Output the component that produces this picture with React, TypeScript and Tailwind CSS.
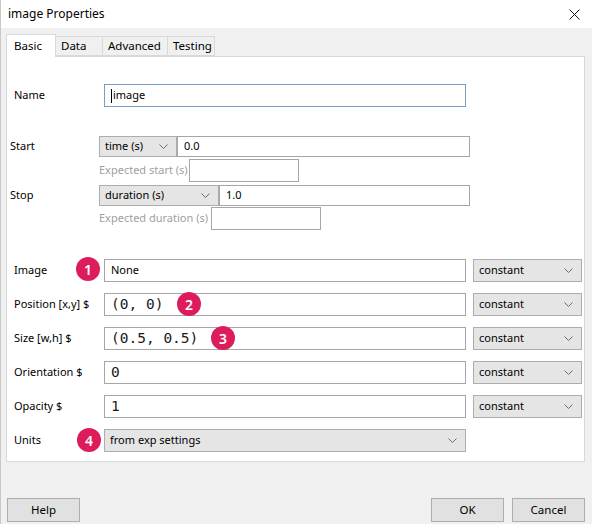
import React from "react";

const ui = "font-['Noto_Sans','Open_Sans',sans-serif]";
const mono = "font-['DejaVu_Sans_Mono','Liberation_Mono',monospace]";

function Chevron() {
  return (
    <svg width="9" height="5" viewBox="0 0 9 5" className="shrink-0">
      <path d="M0.5 0.5 L4.5 4.5 L8.5 0.5" fill="none" stroke="#6d6d6d" strokeWidth="1" />
    </svg>
  );
}

function Select({ label, width, height = "h-[23px]" }: { label: string; width: string; height?: string }) {
  return (
    <div
      className={`${width} ${height} flex shrink-0 items-center justify-between border border-[#adadad] bg-[#e5e5e5] pl-[5px] pr-[8px] text-black`}
    >
      <span>{label}</span>
      <Chevron />
    </div>
  );
}

function TextBox({
  value,
  width,
  height = "h-[23px]",
  code = false,
}: {
  value?: string;
  width: string;
  height?: string;
  code?: boolean;
}) {
  return (
    <div
      className={`${width} ${height} flex shrink-0 items-center border border-[#a6a6a6] bg-white pl-[6px] ${
        code ? `${mono} text-[14.5px] text-[#1a1a1a]` : "text-black"
      }`}
    >
      {value}
    </div>
  );
}

function Badge({ n, className }: { n: number; className: string }) {
  return (
    <div
      className={`absolute flex h-6 w-6 items-center justify-center rounded-full bg-[#dd1c5c] text-[14px] font-semibold text-white ${className}`}
    >
      {n}
    </div>
  );
}

const tabs = [
  { label: "Basic", w: "w-[50px]" },
  { label: "Data", w: "w-[47px]" },
  { label: "Advanced", w: "w-[65px]" },
  { label: "Testing", w: "w-[47px]" },
];

function ParamRow({
  label,
  value,
  code,
  children,
}: {
  label: string;
  value: string;
  code?: boolean;
  children?: React.ReactNode;
}) {
  return (
    <div className="relative flex h-[23px] items-center pl-[7px]">
      <span className="w-[90px] shrink-0">{label}</span>
      <TextBox value={value} width="w-[362px]" code={code} />
      <div className="ml-[7px]">
        <Select label="constant" width="w-[109px]" />
      </div>
      {children}
    </div>
  );
}

export default function App() {
  return (
    <div className={`${ui} flex h-[524px] w-[592px] flex-col border-l border-[#c8c8c8] bg-[#f0f0f0] text-[11px] text-black`}>
      {/* title bar */}
      <div className="flex h-[28px] shrink-0 items-center justify-between bg-white pl-[7px] pr-[12px]">
        <span className="text-[12px]">image Properties</span>
        <svg width="11" height="11" viewBox="0 0 11 11">
          <path d="M0.5 0.5 L10.5 10.5 M10.5 0.5 L0.5 10.5" stroke="#111" strokeWidth="1" />
        </svg>
      </div>

      {/* tabs */}
      <div className="ml-[5px] mt-[5px] flex h-[23px] items-end text-[11.5px]">
        {tabs.map((t, i) =>
          i === 0 ? (
            <div
              key={t.label}
              className={`${t.w} relative z-10 -mb-px flex h-[23px] items-start border border-b-0 border-[#d9d9d9] bg-white pl-[7px] pt-[2px]`}
            >
              {t.label}
            </div>
          ) : (
            <div
              key={t.label}
              className={`${t.w} flex h-[20px] items-center border border-l-0 border-[#d9d9d9] bg-[#f0f0f0] pl-[5px]`}
            >
              {t.label}
            </div>
          ),
        )}
      </div>

      {/* panel */}
      <div className="ml-[5px] mr-[7px] flex h-[406px] flex-col border border-[#d9d9d9] bg-white">
        {/* name */}
        <div className="mt-[27px] flex h-[23px] items-center pl-[7px]">
          <span className="w-[90px] shrink-0">Name</span>
          <div className="flex h-[23px] w-[362px] items-center border border-[#7a9cc6] bg-white pl-[6px]">
            <span className="mr-px h-[14px] w-px bg-black" />
            image
          </div>
        </div>

        {/* start */}
        <div className="mt-[29px] flex h-[21px] items-center pl-[3px]">
          <span className="w-[89px] shrink-0">Start</span>
          <Select label="time (s)" width="w-[78px]" height="h-[21px]" />
          <TextBox value="0.0" width="w-[293px]" height="h-[21px]" />
        </div>
        <div className="mt-[2px] flex h-[23px] items-center pl-[92px]">
          <span className="w-[90px] shrink-0 whitespace-nowrap text-[#a0a0a0]">Expected start (s)</span>
          <TextBox width="w-[110px]" />
        </div>

        {/* stop */}
        <div className="mt-[3px] flex h-[21px] items-center pl-[3px]">
          <span className="w-[89px] shrink-0">Stop</span>
          <Select label="duration (s)" width="w-[120px]" height="h-[21px]" />
          <TextBox value="1.0" width="w-[251px]" height="h-[21px]" />
        </div>
        <div className="mt-px flex h-[23px] items-center pl-[92px]">
          <span className="w-[112px] shrink-0 whitespace-nowrap text-[#a0a0a0]">Expected duration (s)</span>
          <TextBox width="w-[110px]" />
        </div>

        {/* params */}
        <div className="mt-[29px] flex flex-col gap-[11px]">
          <ParamRow label="Image" value="None">
            <Badge n={1} className="left-[69px] top-[-2px]" />
          </ParamRow>
          <ParamRow label="Position [x,y] $" value="(0, 0)" code>
            <Badge n={2} className="left-[170px] top-[-1px]" />
          </ParamRow>
          <ParamRow label="Size [w,h] $" value="(0.5, 0.5)" code>
            <Badge n={3} className="left-[204px] top-[-1px]" />
          </ParamRow>
          <ParamRow label="Orientation $" value="0" code />
          <ParamRow label="Opacity $" value="1" code />
          <div className="relative flex h-[23px] items-center pl-[7px]">
            <span className="w-[90px] shrink-0">Units</span>
            <Select label="from exp settings" width="w-[362px]" />
            <Badge n={4} className="left-[70px] top-[-1px]" />
          </div>
        </div>
      </div>

      {/* buttons */}
      <div className="mt-[36px] flex items-center pl-[6px] pr-[7px] text-[11.5px]">
        <button className="h-[24px] w-[73px] border border-[#adadad] bg-[#e1e1e1]">Help</button>
        <div className="ml-auto flex gap-[8px]">
          <button className="h-[24px] w-[73px] border border-[#adadad] bg-[#e1e1e1]">OK</button>
          <button className="h-[24px] w-[73px] border border-[#adadad] bg-[#e1e1e1]">Cancel</button>
        </div>
      </div>
    </div>
  );
}
